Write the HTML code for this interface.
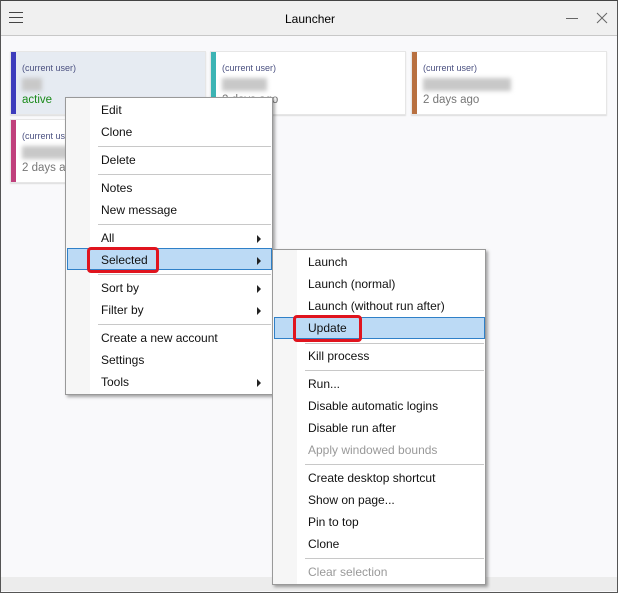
<!DOCTYPE html>
<html><head><meta charset="utf-8"><style>
*{margin:0;padding:0;box-sizing:border-box}
body{width:618px;height:593px;overflow:hidden;background:#f9f9fb;font-family:"Liberation Sans",sans-serif;font-size:12px;color:#000;position:relative}
.a{position:absolute}
.win{left:0;top:0;width:618px;height:593px;border:1px solid #555;border-top:1px solid #444}
.title{left:1px;top:1px;width:616px;height:35px;background:#f0f0f0;border-bottom:1px solid #c8c8c8}
.card{background:#fff;height:64px;border:1px solid #e6e6e6;box-shadow:0 1px 1px #ddd}
.bar{position:absolute;left:0;top:0;width:5px;height:100%}
.cu{position:absolute;left:11px;top:11px;font-size:9px;color:#4a5080}
.blur{position:absolute;left:11px;top:26px;height:13px;background:#c8c8c8;filter:blur(2px)}
.sub{position:absolute;left:11px;top:42px;font-size:11.5px;color:#777}
.menu{background:#fff;border:1px solid #999;box-shadow:2px 2px 3px rgba(0,0,0,.35)}
.gut{position:absolute;left:0;top:0;width:24px;height:100%;background:#f6f6f6}
.it{position:absolute;font-size:12px;color:#111;white-space:nowrap}
.sep{position:absolute;height:1px;background:#c8c8c8}
.arr{position:absolute;width:0;height:0;border-left:4px solid #222;border-top:4px solid transparent;border-bottom:4px solid transparent}
.hl{position:absolute;background:#bcdaf5;border:1px solid #2f80c8}
.red{position:absolute;border:3px solid #e0141e;border-radius:4px}
.dis{color:#999}
</style></head><body>
<div class="a win"></div>
<div class="a title"></div>
<div class="a" style="left:9px;top:12px;width:14px;height:1px;background:#444"></div>
<div class="a" style="left:9px;top:17px;width:14px;height:1px;background:#444"></div>
<div class="a" style="left:9px;top:22px;width:14px;height:1px;background:#444"></div>
<div class="a" style="left:285px;top:12px;font-size:12px">Launcher</div>
<div class="a" style="left:566px;top:18px;width:12px;height:1px;background:#666"></div>
<svg class="a" style="left:596px;top:12px" width="12" height="12"><path d="M1 1L11 11M11 1L1 11" stroke="#666" stroke-width="1"/></svg>

<div class="a card" style="left:10px;top:51px;width:196px;background:#e6ebf2"><div class="bar" style="background:#3c3cbc"></div><div class="cu">(current user)</div><div class="blur" style="width:20px"></div><div class="sub" style="color:#1a8a1a">active</div></div>
<div class="a card" style="left:210px;top:51px;width:196px"><div class="bar" style="background:#3cb4b4"></div><div class="cu">(current user)</div><div class="blur" style="width:45px"></div><div class="sub">2 days ago</div></div>
<div class="a card" style="left:411px;top:51px;width:196px"><div class="bar" style="background:#b87040"></div><div class="cu">(current user)</div><div class="blur" style="width:88px"></div><div class="sub">2 days ago</div></div>
<div class="a card" style="left:10px;top:119px;width:196px"><div class="bar" style="background:#c0407c"></div><div class="cu">(current user)</div><div class="blur" style="width:70px"></div><div class="sub">2 days ago</div></div>

<div class="a" style="left:1px;top:577px;width:616px;height:14px;background:#ececec"></div>

<div class="a menu" style="left:65px;top:97px;width:208px;height:298px"><div class="gut"></div>
<div class="hl" style="left:1px;top:150px;width:205px;height:22px"></div>
<div class="it" style="left:35px;top:5px">Edit</div>
<div class="it" style="left:35px;top:27px">Clone</div>
<div class="sep" style="left:32px;top:48px;width:173px"></div>
<div class="it" style="left:35px;top:55px">Delete</div>
<div class="sep" style="left:32px;top:76px;width:173px"></div>
<div class="it" style="left:35px;top:83px">Notes</div>
<div class="it" style="left:35px;top:105px">New message</div>
<div class="sep" style="left:32px;top:126px;width:173px"></div>
<div class="it" style="left:35px;top:133px">All</div><div class="arr" style="left:191px;top:137px"></div>
<div class="it" style="left:35px;top:155px">Selected</div><div class="arr" style="left:191px;top:159px"></div>
<div class="sep" style="left:32px;top:176px;width:173px"></div>
<div class="it" style="left:35px;top:183px">Sort by</div><div class="arr" style="left:191px;top:187px"></div>
<div class="it" style="left:35px;top:205px">Filter by</div><div class="arr" style="left:191px;top:209px"></div>
<div class="sep" style="left:32px;top:226px;width:173px"></div>
<div class="it" style="left:35px;top:233px">Create a new account</div>
<div class="it" style="left:35px;top:255px">Settings</div>
<div class="it" style="left:35px;top:277px">Tools</div><div class="arr" style="left:191px;top:281px"></div>
</div>
<div class="red" style="left:87px;top:247px;width:72px;height:26px"></div>

<div class="a menu" style="left:272px;top:249px;width:214px;height:336px"><div class="gut"></div>
<div class="hl" style="left:1px;top:67px;width:211px;height:22px"></div>
<div class="it" style="left:35px;top:5px">Launch</div>
<div class="it" style="left:35px;top:27px">Launch (normal)</div>
<div class="it" style="left:35px;top:49px">Launch (without run after)</div>
<div class="it" style="left:35px;top:71px">Update</div>
<div class="sep" style="left:32px;top:93px;width:179px"></div>
<div class="it" style="left:35px;top:99px">Kill process</div>
<div class="sep" style="left:32px;top:120px;width:179px"></div>
<div class="it" style="left:35px;top:127px">Run...</div>
<div class="it" style="left:35px;top:149px">Disable automatic logins</div>
<div class="it" style="left:35px;top:171px">Disable run after</div>
<div class="it dis" style="left:35px;top:193px">Apply windowed bounds</div>
<div class="sep" style="left:32px;top:214px;width:179px"></div>
<div class="it" style="left:35px;top:221px">Create desktop shortcut</div>
<div class="it" style="left:35px;top:243px">Show on page...</div>
<div class="it" style="left:35px;top:265px">Pin to top</div>
<div class="it" style="left:35px;top:287px">Clone</div>
<div class="sep" style="left:32px;top:308px;width:179px"></div>
<div class="it dis" style="left:35px;top:315px">Clear selection</div>
</div>
<div class="red" style="left:293px;top:315px;width:69px;height:27px"></div>
</body></html>
